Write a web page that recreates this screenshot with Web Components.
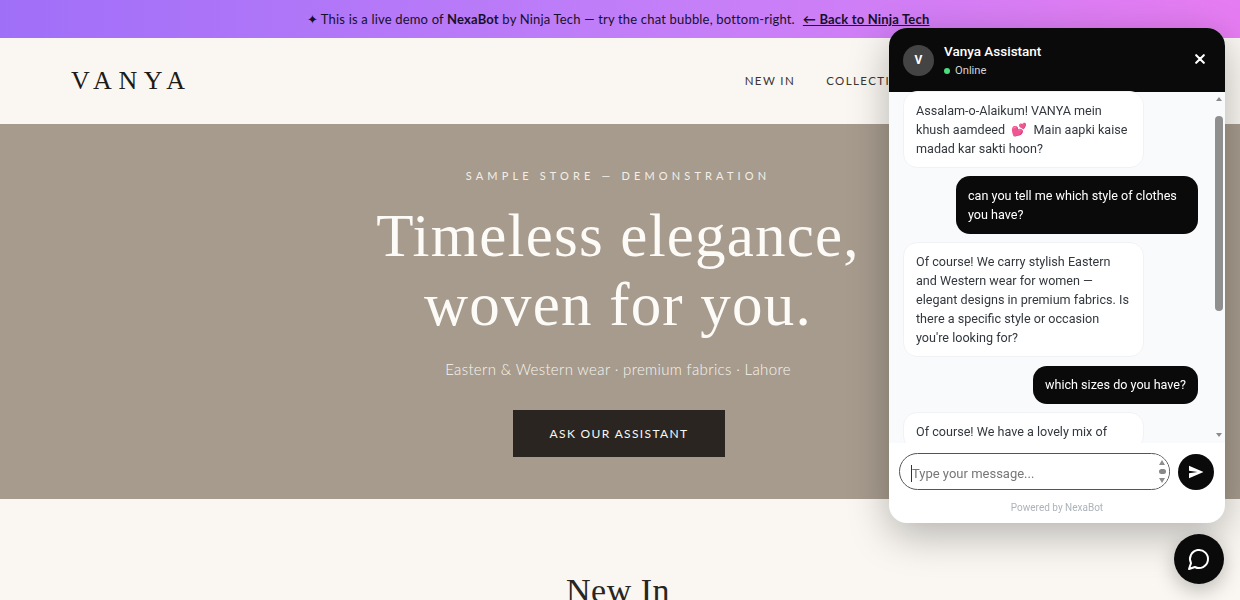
<!DOCTYPE html>
<html lang="en">
<head>
<meta charset="utf-8">
<title>VANYA</title>
<style>
html,body{margin:0;padding:0;height:100%;overflow:hidden;background:#faf7f2}
body{font-family:"Lato","Liberation Sans",sans-serif}
</style>
</head>
<body>
<demo-banner>✦ This is a live demo of <b>NexaBot</b> by Ninja Tech — try the chat bubble, bottom-right.<a href="#">← Back to Ninja Tech</a></demo-banner>
<site-nav></site-nav>
<hero-section></hero-section>
<new-in-section></new-in-section>
<chat-widget>
  <chat-bubble from="bot">Assalam-o-Alaikum! VANYA mein khush aamdeed &nbsp;💕&nbsp; Main aapki kaise madad kar sakti hoon?</chat-bubble>
  <chat-bubble from="user">can you tell me which style of clothes you have?</chat-bubble>
  <chat-bubble from="bot">Of course! We carry stylish Eastern and Western wear for women — elegant designs in premium fabrics. Is there a specific style or occasion you're looking for?</chat-bubble>
  <chat-bubble from="user">which sizes do you have?</chat-bubble>
  <chat-bubble from="bot">Of course! We have a lovely mix of</chat-bubble>
</chat-widget>
<script>
function def(name, css, html){
  customElements.define(name, class extends HTMLElement{
    constructor(){super();const r=this.attachShadow({mode:"open"});r.innerHTML="<style>"+css+"</style>"+html;}
  });
}
def("demo-banner",`
:host{display:flex;justify-content:center;align-items:center;height:38px;padding-right:4px;
background:linear-gradient(90deg,#a06ff8 0%,#c47ff8 55%,#e77cf2 100%);color:#17102a;
font:400 13px/1 "Lato","Liberation Sans",sans-serif;letter-spacing:.18px;white-space:pre}
::slotted(a){color:#17102a;font-weight:700;margin-left:8px;text-decoration:underline}
::slotted(b){font-weight:700}
`,`<slot></slot>`);
def("site-nav",`
:host{display:flex;align-items:center;height:86px;padding:0 4px 0 71px;background:#faf7f2;color:#3a3530;box-sizing:border-box}
.logo{font:400 26px/1 "Liberation Serif",serif;letter-spacing:6.6px;color:#1e1a16;flex:0 0 auto}
nav{display:flex;gap:31px;margin-left:553px;font:400 11.5px/1 "Lato","Liberation Sans",sans-serif;letter-spacing:1.4px;white-space:nowrap}
`,`<div class="logo">VANYA</div><nav><span>NEW IN</span><span>COLLECTIONS</span></nav>`);
def("hero-section",`
:host{display:flex;flex-direction:column;align-items:center;height:375px;box-sizing:border-box;padding:45px 4px 0 0;background:#a69b8d;color:#fdfbf7;text-align:center}
.eye{font:400 11px/13px "Lato","Liberation Sans",sans-serif;letter-spacing:4.15px;color:#f3efe8}
h1{margin:19px 0 0;font:400 61px/69px "Liberation Serif",serif;letter-spacing:1.2px}
p{margin:19px 0 0;font:300 15px/22px "Lato","Liberation Sans",sans-serif;letter-spacing:.35px;color:#f8f5ef}
.btn{display:flex;align-items:center;justify-content:center;margin:30px 0 0 2px;width:212px;height:47px;background:#2a2520;color:#faf7f2;font:400 12px/1 "Lato","Liberation Sans",sans-serif;letter-spacing:1.35px}
`,`<div class="eye">SAMPLE STORE — DEMONSTRATION</div><h1>Timeless elegance,<br>woven for you.</h1><p>Eastern &amp; Western wear · premium fabrics · Lahore</p><div class="btn">ASK OUR ASSISTANT</div>`);
def("new-in-section",`
:host{display:block;padding:72px 4px 0 0;background:#faf7f2;text-align:center;color:#2a2520}
h2{margin:0;font:400 34px/40px "Liberation Serif",serif;letter-spacing:.5px}
`,`<h2>New In</h2>`);
def("chat-bubble",`
:host{display:block;box-sizing:border-box;width:fit-content;max-width:242px;padding:9.5px 12px;font:400 12.6px/19.2px "Roboto","Open Sans",sans-serif;border-radius:14px;flex:0 0 auto}
:host([from=bot]){align-self:flex-start;width:241px;background:#fff;color:#33383e;border:1px solid #f0f2f6;padding:8.5px 12px}
:host([from=user]){align-self:flex-end;background:#0a0a0a;color:#fff}
`,`<slot></slot>`);
def("chat-widget",`
:host{position:fixed;left:889px;top:28px;width:336px;height:495px;border-radius:18px;background:#fff;overflow:hidden;display:flex;flex-direction:column;box-shadow:0 12px 40px rgba(0,0,0,.28);font-family:"Roboto","Open Sans",sans-serif;z-index:2}
header{display:flex;align-items:center;height:64px;flex:0 0 auto;background:#0a0a0a;color:#fff;padding:0 20px 0 14px;box-sizing:border-box}
.av{width:31px;height:31px;border-radius:50%;background:#444;display:flex;align-items:center;justify-content:center;font:700 12px/1 "Roboto",sans-serif;margin-right:10px}
.who{flex:1;display:flex;flex-direction:column;gap:4px}
.name{font:500 13.5px/18px "Roboto",sans-serif}
.st{display:flex;align-items:center;gap:5px;font:400 11.2px/14px "Roboto",sans-serif;color:#d5d5d5}
.dot{width:6px;height:6px;border-radius:50%;background:#4ade80}
.x{width:10px;height:10px;display:block;margin-top:-2px}
.mid{flex:1;min-height:0;display:flex;background:#f8fafc}
.list{flex:1;min-width:0;overflow:hidden;display:flex;flex-direction:column;gap:8.5px;padding:0 16px 0 14px;margin-top:-1px;box-sizing:border-box}
.bar{width:10px;margin-right:1px;flex:0 0 auto;display:flex;flex-direction:column;align-items:center;padding-top:5px;box-sizing:border-box}
.up{width:0;height:0;border:3.5px solid transparent;border-top:0;border-bottom:4px solid #8b8b8b}
.down{width:0;height:0;border:3.5px solid transparent;border-bottom:0;border-top:4px solid #8b8b8b;margin-top:122px}
.thumb{width:8px;height:195px;border-radius:4px;background:#8f8f8f;margin-top:15px}
.inp{flex:0 0 auto;display:flex;align-items:center;padding:10px 10px 0;box-sizing:border-box}
.field{position:relative;width:271px;height:37px;box-sizing:border-box;border:1.5px solid #555;border-radius:19px;display:flex;align-items:center;padding:3px 0 0 11px;font:400 13px/1 "Roboto",sans-serif;color:#777;overflow:hidden}
.caret{width:1px;height:17px;background:#333}
.spin{position:absolute;right:0;top:0;bottom:0;width:14px;background:#fff;display:flex;flex-direction:column;align-items:center;justify-content:center;gap:4px}
.spin i{display:block}
.u{width:0;height:0;border:3.5px solid transparent;border-top:0;border-bottom:5px solid #8d8d8d}
.d{width:0;height:0;border:3.5px solid transparent;border-bottom:0;border-top:5px solid #8d8d8d}
.m{width:7px;height:5px;border-radius:3px;background:#888}
.send{width:36px;height:36px;border-radius:50%;background:#0a0a0a;margin-left:8px;display:flex;align-items:center;justify-content:center;flex:0 0 auto}
.pw{text-align:center;font:400 10px/14px "Roboto",sans-serif;color:#adb3ba;margin-top:11px;padding-bottom:8px}
`,`<header><div class="av">V</div><div class="who"><div class="name">Vanya Assistant</div><div class="st"><span class="dot"></span>Online</div></div>
<svg class="x" viewBox="0 0 10 10"><path d="M1.2 1.2l7.6 7.6M8.8 1.2l-7.6 7.6" stroke="#fff" stroke-width="2.1" stroke-linecap="round"/></svg></header>
<div class="mid"><div class="list"><slot></slot></div><div class="bar"><div class="up"></div><div class="thumb"></div><div class="down"></div></div></div>
<div class="inp"><div class="field"><span class="caret"></span>Type your message...<div class="spin"><i class="u"></i><i class="m"></i><i class="d"></i></div></div>
<div class="send"><svg width="18" height="18" viewBox="0 0 18 18"><path d="M2 2.8L16.5 9 2 15.2l0-4.9L10.5 9 2 7.7z" fill="#fff"/></svg></div></div>
<div class="pw">Powered by NexaBot</div>`);
def("chat-launcher",`
:host{position:fixed;left:1174px;top:534px;width:50px;height:50px;border-radius:50%;background:#0a0a0a;display:flex;align-items:center;justify-content:center;box-shadow:0 6px 20px rgba(0,0,0,.25);z-index:3}
`,`<svg width="24" height="24" viewBox="0 0 24 24" fill="none" stroke="#fff" stroke-width="2" stroke-linecap="round" stroke-linejoin="round"><path d="M7.9 20A9 9 0 1 0 4 16.1L2 22z"/></svg>`);
document.body.appendChild(document.createElement("chat-launcher"));
</script>
</body>
</html>
